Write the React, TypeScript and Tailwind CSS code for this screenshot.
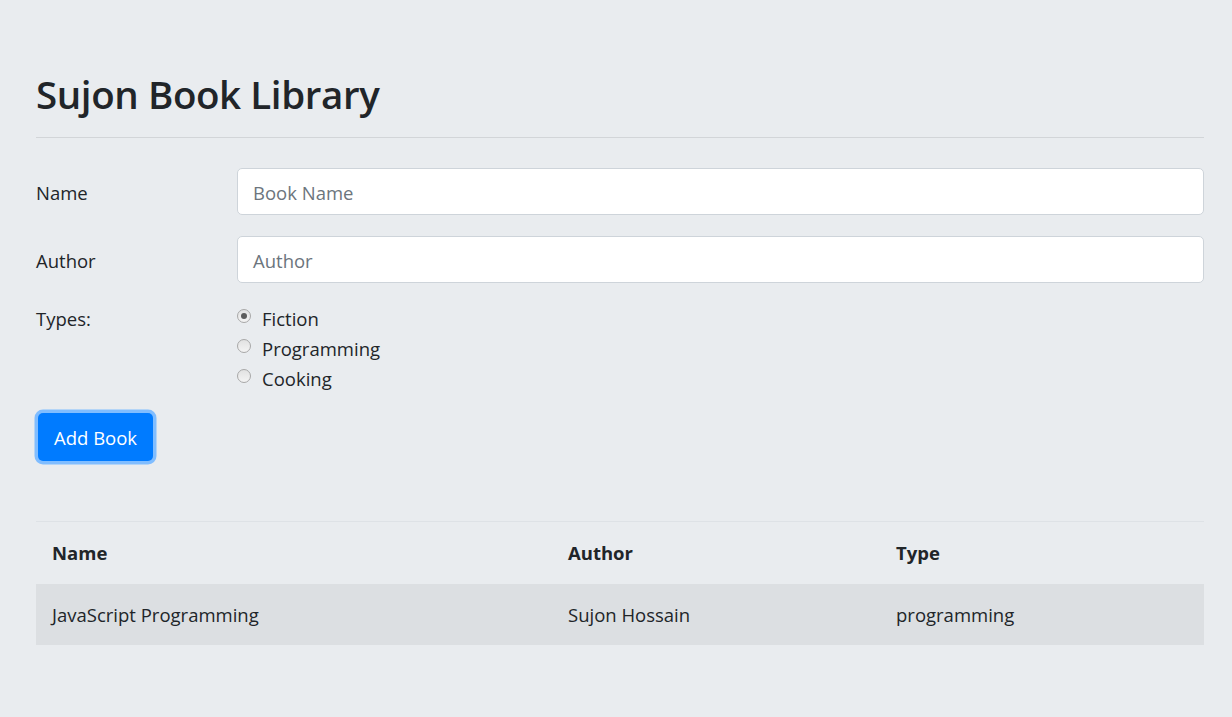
import React from "react";

const Radio = ({ checked }: { checked?: boolean }) => (
  <span className="flex h-[14px] w-[14px] items-center justify-center rounded-full border border-[#a8a8a8] bg-gradient-to-b from-[#e2e2e2] to-[#f4f4f4]">
    {checked && <span className="h-[6px] w-[6px] rounded-full bg-[#5c5c5c]" />}
  </span>
);

const App = () => {
  const types = [
    { id: 1, label: "Fiction", checked: true },
    { id: 2, label: "Programming" },
    { id: 3, label: "Cooking" },
  ];

  return (
    <div
      className="min-h-[717px] bg-[#e9ecef] pl-9 pr-[28px] pt-[70px] text-[#212529]"
      style={{ fontFamily: '"Open Sans", "Noto Sans", sans-serif' }}
    >
      <h1 className="h-12 text-[38.5px] font-semibold leading-[48px] tracking-[-0.4px]">
        Sujon Book Library
      </h1>
      <hr className="mt-[19px] border-[#d2d5d8]" />

      <div className="mt-[30px] flex flex-col gap-[21px] text-[18.5px]">
        <div className="flex items-center">
          <label className="w-[201px] pt-[2px]">Name</label>
          <div className="flex h-[47px] flex-1 items-center rounded-[5px] border border-[#ced4da] bg-white px-[15px] pt-[2px] text-[#6c757d]">
            Book Name
          </div>
        </div>
        <div className="flex items-center">
          <label className="w-[201px] pt-[2px]">Author</label>
          <div className="flex h-[47px] flex-1 items-center rounded-[5px] border border-[#ced4da] bg-white px-[15px] pt-[2px] text-[#6c757d]">
            Author
          </div>
        </div>
      </div>

      <div className="mt-[21px] flex text-[18.5px]">
        <div className="w-[201px] leading-[30px]">Types:</div>
        <div className="flex flex-col">
          {types.map((t) => (
            <div key={t.id} className="flex h-[30px] items-center">
              <span className="-mt-[6px]">
                <Radio checked={t.checked} />
              </span>
              <span className="ml-[11px]">{t.label}</span>
            </div>
          ))}
        </div>
      </div>

      <button className="ml-[2px] mt-[19px] h-[48px] rounded-[5px] bg-[#007bff] px-[16px] pt-[1px] text-[18.5px] text-white ring-[3.5px] ring-[#80bdff]">
        Add Book
      </button>

      <table className="mt-[60px] w-full table-fixed border-t border-[#dee2e6] text-[18.5px]">
        <thead>
          <tr className="h-[62px] text-left">
            <th className="w-[532px] pl-[16px] pt-[1px] font-bold">Name</th>
            <th className="w-[328px] pt-[1px] font-bold">Author</th>
            <th className="pt-[1px] font-bold">Type</th>
          </tr>
        </thead>
        <tbody>
          <tr className="h-[61px] bg-[#dcdfe2]">
            <td className="pl-[16px] pt-[2px]">JavaScript Programming</td>
            <td className="pt-[2px]">Sujon Hossain</td>
            <td className="pt-[2px]">programming</td>
          </tr>
        </tbody>
      </table>
    </div>
  );
};

export default App;
